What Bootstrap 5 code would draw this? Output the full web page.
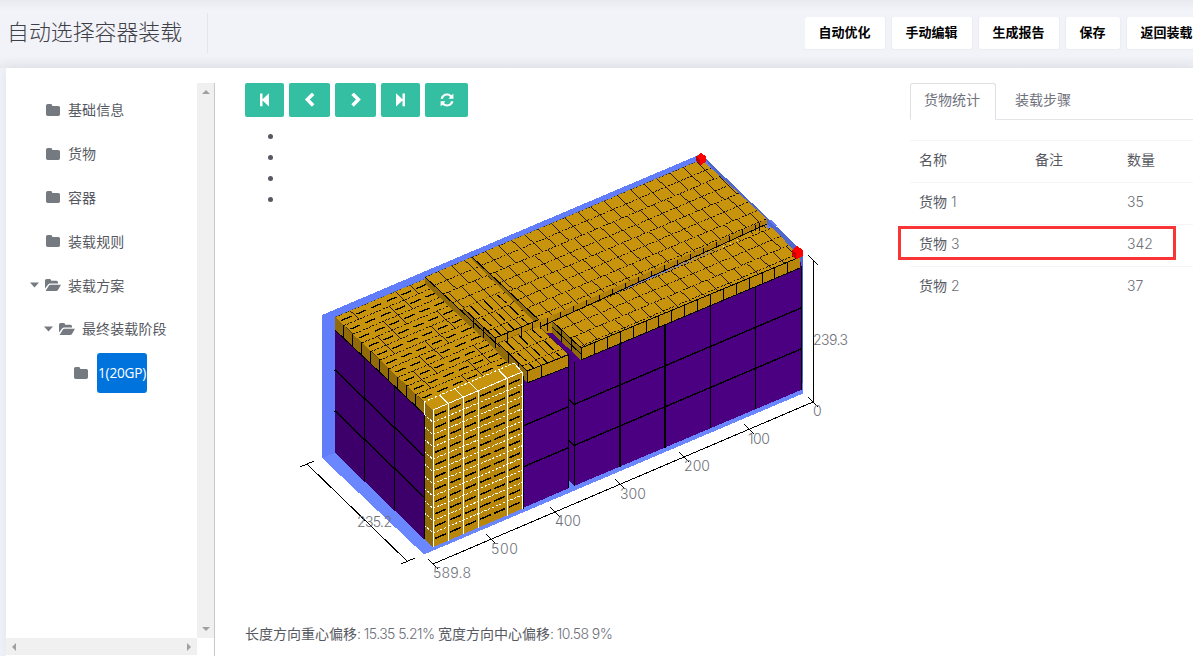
<!DOCTYPE html>
<html lang="zh-CN">
<head>
<meta charset="utf-8">
<meta name="viewport" content="width=device-width, initial-scale=1">
<title>自动选择容器装载</title>
<link href="https://cdn.jsdelivr.net/npm/bootstrap@5.3.0/dist/css/bootstrap.min.css" rel="stylesheet">
<style>
  body{font:400 14px/21px Inter,"Noto Sans CJK SC",sans-serif;color:#575962;background:#f2f3f8;height:100vh;overflow:hidden}
  .page-head{height:68px;background:linear-gradient(#e9e9f0,#f2f3f8 10px,#f2f3f8 55px,#ebecf2)}
  .page-title{width:201px;height:40px;margin:13px 0 0 7px;font-size:21.9px;line-height:38px;font-weight:300;color:#3f4047;border-right:1px solid #e2e5ec;white-space:nowrap}
  .actions{margin-top:17px;width:388px;gap:7px;white-space:nowrap;overflow:hidden;height:33px}
  .actions .btn{--bs-btn-padding-x:14px;--bs-btn-padding-y:0;height:32px;width:80px;flex:none;padding:0 1px 0 0;font-size:13px;font-weight:700;line-height:28px;background:#fff;color:#000;border-radius:2px;border:0;box-shadow:0 0 2px #dcdde5;font-family:"Noto Sans CJK SC",sans-serif}
  .actions .btn{padding-bottom:2px}
  .actions .slim{width:54px}
  .panel{margin-left:6px;height:588px;background:#fff;box-shadow:0 0 12px rgba(69,65,78,.09);padding-top:15px}
  .side{width:209px;flex:none;border-right:1px solid #c9c9c9}
  .side-body{height:555px}
  .vbar{width:17px;background:#f0f0f0;padding:6px 0}
  .hbar{width:191px;height:17px;background:#f0f0f0;padding:0 5px}
  .vbar svg,.hbar svg{fill:#a0a0a0;display:block}
  .tree{padding-top:5px;width:191px}
  .tree-row{height:43.8px;display:flex;align-items:center;white-space:nowrap;letter-spacing:.1px}
  .tree-row svg{fill:#757980;flex:none}
  .fold{width:16px;height:14px;margin-right:7px}
  .caret{width:9px;height:6px;margin-right:6px}
  .l1{padding-left:39px}.l1c{padding-left:24px}.l2{padding-left:38px}.l3{padding-left:67px}
  .picked{background:#0073dd;color:#fff;width:50px;height:40px;border-radius:3px;margin-left:1px;text-align:center;font:400 13.6px/40px "Open Sans",sans-serif;letter-spacing:-.2px}
  .work{margin-left:30px;width:640px;flex:none}
  .tools{gap:5px}
  .tools .btn{height:34px;padding:0;border:0;border-radius:2px;background:#34bfa3;display:flex;align-items:center;justify-content:center;flex:none}
  .tools svg{fill:#fff;width:14px;height:14px}
  .w39{width:39px}.w41{width:41px}.w43{width:43px}
  .stage{display:grid;margin-top:8px;height:489px}
  .stage>*{grid-area:1/1}
  .stage ul{margin:0;padding-left:39px;height:84px}
  .stage svg{width:640px;height:480px;display:block;margin-top:1px}
  .stage text{font:300 14px Inter,sans-serif;fill:#6d7078}
  .offsets{height:21px;margin-top:9px;white-space:nowrap}
  .offsets .num{letter-spacing:-.55px}
  .info{margin-left:25px;width:283px;flex:none;position:relative}
  .info .nav-tabs{--bs-nav-tabs-border-color:#e4e5e9;height:37px;flex-wrap:nowrap}
  .info .nav-link{padding:5px 13px 9px;height:37px;color:#6f727d;border-radius:3px 3px 0 0;width:86px;white-space:nowrap;line-height:21px}
  .info .nav-link.active{color:#6f727d;border-color:#dddfe3 #dddfe3 #fff}
  .info .second{margin-left:5px}
  .info .table{margin:20px 0 0;--bs-table-color:#575962;--bs-table-bg:transparent;border-color:#f4f5f8;table-layout:fixed}
  .info .table td,.info .table th{height:42px;padding:8px 9px 0;border-width:1px 0 0;font-weight:400;line-height:21px}
  .num,.info .table td.num{color:#6d7078;font-weight:300}
  .marker{position:absolute;left:-12px;top:143px;width:278px;height:34px;border:3px solid #f93535}
</style>
</head>
<body>
<svg width="0" height="0" class="d-none">
  <symbol id="folder" viewBox="0 0 16 14"><path d="M1 2.8Q1 1 2.8 1h3Q7.300 1 7.300 2.900H13.300Q15 2.900 15 4.600v6.700Q15 13 13.300 13H2.700Q1 13 1 11.300z"/></symbol>
  <symbol id="open" viewBox="0 0 16 14"><path d="M0 10.500V2.600Q0 1 1.600 1h3.200Q6.200 1 6.200 2.700h5.200Q13 2.700 13 4.300V5.500H5.300Q4 5.500 3.100 6.600zM.6 13l3.200-5.200Q4.400 6.700 5.500 6.700H16l-3 5.200Q12.400 13 11.200 13z"/></symbol>
  <symbol id="down" viewBox="0 0 9 6"><path d="M0 .5h9L4.500 5.500z"/></symbol>
</svg>

<header class="page-head d-flex justify-content-between">
  <h1 class="page-title">自动选择容器装载</h1>
  <div class="actions d-flex">
    <button class="btn">自动优化</button><button class="btn">手动编辑</button><button class="btn">生成报告</button><button class="btn slim">保存</button><button class="btn">返回装载</button>
  </div>
</header>

<main class="panel d-flex">
  <aside class="side">
    <div class="side-body d-flex">
      <div class="tree">
        <div class="tree-row l1"><svg class="fold"><use href="#folder"/></svg>基础信息</div>
        <div class="tree-row l1"><svg class="fold"><use href="#folder"/></svg>货物</div>
        <div class="tree-row l1"><svg class="fold"><use href="#folder"/></svg>容器</div>
        <div class="tree-row l1"><svg class="fold"><use href="#folder"/></svg>装载规则</div>
        <div class="tree-row l1c"><svg class="caret"><use href="#down"/></svg><svg class="fold"><use href="#open"/></svg>装载方案</div>
        <div class="tree-row l2"><svg class="caret"><use href="#down"/></svg><svg class="fold"><use href="#open"/></svg>最终装载阶段</div>
        <div class="tree-row l3"><svg class="fold"><use href="#folder"/></svg><span class="picked">1(20GP)</span></div>
      </div>
      <div class="vbar d-flex flex-column justify-content-between align-items-center">
        <svg width="8" height="5"><path d="M0 5 4 1l4 4z"/></svg><svg width="8" height="5"><path d="M0 0h8L4 4z"/></svg>
      </div>
    </div>
    <div class="hbar d-flex justify-content-between align-items-center">
      <svg width="5" height="8"><path d="M5 0v8L1 4z"/></svg><svg width="5" height="8"><path d="M0 0v8l4-4z"/></svg>
    </div>
  </aside>

  <section class="work">
    <div class="tools d-flex">
      <button class="btn w39"><svg viewBox="0 0 14 14"><path d="M2 .5H4.500v5.700L11 .2v13.300L4.500 7.500V13.200H2z"/></svg></button>
      <button class="btn w41"><svg viewBox="0 0 14 14"><path d="M8.900-.5l2.500 2.500L6.800 6.600l4.600 4.600-2.500 2.500L1.900 6.600z"/></svg></button>
      <button class="btn w41"><svg viewBox="0 0 14 14"><path d="M4.800-.5 2.300 2 6.900 6.600 2.300 11.200l2.500 2.500L11.800 6.600z"/></svg></button>
      <button class="btn w39"><svg viewBox="0 0 14 14"><path d="M11 .5H8.500v5.700L2 .2v13.300l6.500-6V13.200H11z"/></svg></button>
      <button class="btn w43"><svg viewBox="0 0 14 14"><path d="M.6 5.800C1.200 2.600 3.700.6 7 .6c1.700 0 3.200.6 4.400 1.700L13.400.8v5H8.500l1.600-1.900C9.200 3 8.200 2.600 7 2.600c-1.900 0-3.400 1.100-4 3.200zM13.400 8.200c-.6 3.200-3.100 5.200-6.400 5.200-1.700 0-3.200-.6-4.400-1.700L.6 13.200v-5h4.900l-1.600 1.900c.9.900 1.900 1.300 3.100 1.300 1.900 0 3.400-1.100 4-3.200z"/></svg></button>
    </div>
    <div class="stage">
      <ul><li></li><li></li><li></li><li></li></ul>
      <svg viewBox="245 126 640 480">
        <g shape-rendering="crispEdges">
          <path fill="#617dfa" d="M322 315 701 154 720 173V300L335 453 322 458z"/>
          <path fill="#5068cc" d="M701 154 803 252V392L790 390V270z"/>
          <path fill="#6a87ff" d="M322 458 335 453 424 538 523 500 803 383V393.500L424 554.500z"/>
          <path fill="#3d006b" d="M335 325 424 408V539L335 453z"/>
          <path fill="#4b0082" d="M490 345 545 315 582 350 801 262V390L574 486 569 481V488L523 508V376z"/>
          <g id="seams" fill="none" stroke="#000"></g>
          <g id="slabs"></g>
          <g id="selected"></g>
          <path fill="#f00" d="M697 156 701 153 706 156V162L701 165 697 162zM792 250 797 246 803 250V256L797 259 792 256z"/>
          <path fill="#c00000" d="M696 156 700 159V164L696 161zM792 250 796 253V258L792 255z"/>
          <path id="axes" fill="none" stroke="#000" d="M813.500 260V402M808 255 818 265M813 402 433 564M307 464 408 562M300 467 314 461M401 564 415 558"/>
        </g>
        <g id="labels">
          <text x="813" y="345" textLength="35">239.3</text><text x="813" y="416">0</text><text x="748" y="444" textLength="22">100</text>
          <text x="684" y="471" textLength="26">200</text><text x="620" y="499" textLength="26">300</text><text x="555" y="526" textLength="26">400</text>
          <text x="491" y="554" textLength="27">500</text><text x="433" y="578" textLength="38">589.8</text><text x="357" y="527" textLength="35">235.2</text>
        </g>
      </svg>
    </div>
    <div class="offsets">长度方向重心偏移<span class="num">: 15.35 5.21% </span>宽度方向中心偏移<span class="num">: 10.58 9%</span></div>
  </section>

  <section class="info">
    <ul class="nav nav-tabs">
      <li class="nav-item"><a class="nav-link active">货物统计</a></li>
      <li class="nav-item second"><a class="nav-link">装载步骤</a></li>
    </ul>
    <table class="table">
      <colgroup><col style="width:116px"><col style="width:92px"><col></colgroup>
      <tr><th>名称</th><th>备注</th><th>数量</th></tr>
      <tr><td>货物 <span class="num">1</span></td><td></td><td class="num">35</td></tr>
      <tr><td>货物 <span class="num">3</span></td><td></td><td class="num">342</td></tr>
      <tr><td>货物 <span class="num">2</span></td><td></td><td class="num">37</td></tr>
    </table>
    <div class="marker"></div>
  </section>
</main>

<script src="https://cdn.jsdelivr.net/npm/bootstrap@5.3.0/dist/js/bootstrap.bundle.min.js"></script>
<script>
// Axonometric drawing: i runs along the container length, j across its width.
const NS = 'http://www.w3.org/2000/svg', S = .425, W = .958;
const el = (parent, tag, attrs) => {
  const e = document.createElementNS(NS, tag);
  for (const k in attrs) e.setAttribute(k, attrs[k]);
  return parent.appendChild(e);
};
const at = (o, i, j) => (o[0] + i + j).toFixed(1) + ' ' + (o[1] - i * S + j * W).toFixed(1);
const seg = (o, i, j, p, q) => 'M' + at(o, i, j) + 'L' + at(o, p, q);
const byId = id => document.getElementById(id);

// seams of the large purple boxes
let d = '';
for (const x of [364.5, 394.5, 424.5]) d += `M${x} ${330 + (x - 335) * .96}V${453 + (x - 335) * .966}`;
for (const y of [370, 411]) d += `M335 ${y}L424 ${y + 86}`;
for (const y of [308, 349]) d += `M801 ${y}L574 ${y + 96.500}l-5 -5`;
for (const y of [426, 467]) d += `M523 ${y}L569 ${y - 19.500}`;
for (const x of [574.5, 620, 665, 710.5, 755.5, 801.5]) d += `M${x} ${266 + (801 - x) * S}V${390 + (801 - x) * S}`;
d += 'M568.500 366V488';
el(byId('seams'), 'path', {d, 'stroke-width': 1.4});

// textures, drawn inside a clipped parallelogram
const slabs = byId('slabs');
let clipNo = 0;
function face(points, fill, origin, len, wid, kind) {
  el(slabs, 'path', {d: 'M' + points + 'z', fill});
  if (!kind) return;
  const id = 'clip' + (++clipNo);
  el(el(slabs, 'clipPath', {id}), 'path', {d: 'M' + points + 'z'});
  const g = el(slabs, 'g', {'clip-path': `url(#${id})`, fill: 'none', stroke: '#000'});
  let rows = '', cross = '', dash = '';
  const bu = kind === 'long' ? 15 : 13.200, bv = 9;
  for (let j = 0, r = 0; j < wid + bv; j += bv, r++) {
    if (kind !== 'stack') rows += seg(origin, 0, j, len, j);
    const shift = kind === 'long' ? 0 : [0, 0, 5, 5, 9, 9][r % 6];
    for (let i = shift; i < len; i += bu) {
      if (kind === 'brick') cross += seg(origin, i, j, i, j + bv);
      if (kind === 'long') {
        if ((r + Math.round(i / bu)) % 4 < 2) cross += seg(origin, i, j, i, j + bv);
        dash += seg(origin, i + 2, j + bv / 2, i + 12, j + bv / 2);
      }
    }
  }
  if (kind === 'stack') {
    for (let i = 0; i < len; i += 13.500) {
      cross += seg(origin, i, 0, i, wid);
      for (let j = 1; j < wid; j += 12) dash += seg(origin, i + 6.500, j, i + 6.500, j + 9);
    }
    for (let j = 0; j < wid; j += 12) rows += seg(origin, 0, j, len, j);
  }
  el(g, 'path', {d: rows, 'stroke-dasharray': '2 1.500', 'stroke-width': .9});
  el(g, 'path', {d: cross, 'stroke-width': .8});
  el(g, 'path', {d: dash, 'stroke-width': 1.300});
}
const TOP = '#c8930d', FRONT = '#b8860b', SIDE = '#916a09';
face('335 317 425 279 514 364 424 402', TOP, [335, 317], 90, 95, 'long');
face('335 317 424 402 424 414 335 330', SIDE);
let edge = '';
for (let x = 343.500; x < 424; x += 9) edge += `M${x} ${317 + (x - 335) * .955}v13`;
edge += 'M335 330 424 414';
// middle strip
face('425 277 472 257 545 327 500 347', TOP, [425, 277], 60, 90, 'brick');
face('425 277 500 347 500 354 425 284', SIDE);
edge += 'M425 277 500 347';
// rear slab
face('472 257 693 163 702 160 767 219 767 228 540 324 472 260', TOP, [472, 257], 235, 82, 'brick');
face('472 257 540 321 540 328 472 260', SIDE);
face('540 321 767 219 767 224 540 327', '#b07f0b');
edge += 'M540 327 767 224';
for (let x = 547; x < 766; x += 13) edge += `M${x}.500 ${(321 - (x - 540) * .449).toFixed(1)}v6`;
el(slabs, 'path', {d: 'M472 257 540 321M759.500 223V233', stroke: '#000', fill: 'none'});
// two short stacks
face('538 320 554 316 554 333 546 333 538 330', FRONT);
face('463 308 499 292 538 326 496 345', TOP, [463, 308], 42, 36, 'stack');
face('463 308 495 338 495 348 463 319', SIDE);
face('495 338 538 320 538 329 495 348', FRONT);
face('498 343 533 328 540 327 568 354 527 371', TOP, [498, 343], 42, 34, 'stack');
face('498 343 527 371 527 382 498 354', SIDE);
face('527 371 568 355 568 367 527 383', FRONT);
edge += 'M463 308 495 338V348M473.500 317V328M483.500 327V338M495 338 538 320M507.500 333V343M521.500 327V337M532.500 323V331M498 343 527 371 568 355V367L527 383V371M508.500 353V363M518.500 362V373M541.500 365V377';
edge += 'M540.500 322V329M547.500 320V331';
// front slab
face('552 321 771 226 800 257 581 348', TOP, [552, 321], 225, 32, 'brick');
face('552 321 581 348 581 360 552 333', SIDE);
face('581 348 800 257 800 268 581 360', FRONT);
edge += 'M552 321 581 348 800 257M581 360 800 268M561.500 330V342M571.500 339V351M552 327 581 354';
for (const x of [581, 594, 607, 620, 633, 646, 658, 671, 684, 697, 710, 723, 736, 749, 762, 774, 787]) edge += `M${x}.500 ${348 - (x - 581) * .418}v12`;
el(slabs, 'path', {d: edge, fill: 'none', stroke: '#000'});
el(slabs, 'path', {d: 'M767 224V228L777 226 771 219z', fill: '#617dfa'});
el(slabs, 'path', {d: 'M767 219V224L781 235 774 225z', fill: '#5068cc'});

// highlighted stack
const sel = byId('selected');
el(sel, 'path', {d: 'M424 402 514 363 522 372 433 410z', fill: TOP});
el(sel, 'path', {d: 'M424 402 433 410V547L424 539z', fill: SIDE});
el(sel, 'path', {d: 'M433 410 522 372V509L433 547z', fill: FRONT});
let solid = 'M424 402V415M433 410 522 372 514 363', dots = 'M424 402 514 363', dark = 'M523.500 376V509M424.500 415V539';
for (const x of [433, 448, 463, 478, 507, 522]) {
  const y = 410 - (x - 433) * S;
  solid += `M${x}.500 ${y}V${y + 137}`;
  if (x > 433 && x < 520) solid += `M${x} ${y}l-8 -8`;
}
for (let k = 1; k < 12; k++) {
  const y = 410 + k * 12.300;
  if (k < 11) dots += `M433 ${y}L522 ${y - 38}M424 ${y - 8}L433 ${y}`;
  for (const x of [435, 450, 465, 480, 494, 509])
    dark += `M${x} ${y - 6 - (x - 433) * S}l11 -4.700`;
}
el(sel, 'path', {d: dots, fill: 'none', stroke: '#fff', 'stroke-dasharray': '2.500 1.500'});
el(sel, 'path', {d: dark, fill: 'none', stroke: '#000', 'stroke-width': 1.500});
el(sel, 'path', {d: solid, fill: 'none', stroke: '#fff'});

// ruler ticks, one per 100 cm
let ticks = '';
for (const x of [813, 749, 684, 620, 555, 491, 433]) {
  const y = 402 + (813 - x) * .4263;
  ticks += `M${x - 5} ${y - 5}L${x + 5} ${y + 5}`;
}
byId('axes').setAttribute('d', byId('axes').getAttribute('d') + ticks);
</script>
</body>
</html>
